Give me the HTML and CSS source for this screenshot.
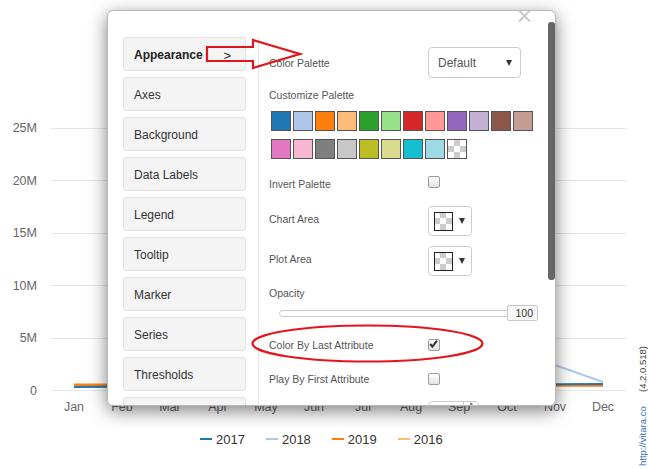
FILE: index.html
```html
<!DOCTYPE html>
<html>
<head>
<meta charset="utf-8">
<link rel="stylesheet" href="styles.css">
</head>
<body>
<div class="page">
  <div class="chart">
    <svg class="plot" width="649" height="428" viewBox="0 0 649 428">
      <g class="grid">
        <line x1="51" y1="128.5" x2="627" y2="128.5"/>
        <line x1="51" y1="180.5" x2="627" y2="180.5"/>
        <line x1="51" y1="233.5" x2="627" y2="233.5"/>
        <line x1="51" y1="285.5" x2="627" y2="285.5"/>
        <line x1="51" y1="338.5" x2="627" y2="338.5"/>
        <line x1="51" y1="390.5" x2="627" y2="390.5"/>
      </g>
      <g class="ylab">
        <text x="37" y="132">25M</text>
        <text x="37" y="185">20M</text>
        <text x="37" y="237">15M</text>
        <text x="37" y="290">10M</text>
        <text x="37" y="342">5M</text>
        <text x="37" y="395">0</text>
      </g>
      <g class="xlab">
        <text x="74" y="411">Jan</text>
        <text x="122" y="411">Feb</text>
        <text x="170" y="411">Mar</text>
        <text x="218" y="411">Apr</text>
        <text x="266" y="411">May</text>
        <text x="314" y="411">Jun</text>
        <text x="363" y="411">Jul</text>
        <text x="411" y="411">Aug</text>
        <text x="459" y="411">Sep</text>
        <text x="507" y="411">Oct</text>
        <text x="555" y="411">Nov</text>
        <text x="603" y="411">Dec</text>
      </g>
      <g class="series">
        <polyline class="s2018" points="74,386 507,386 555,365 603,382"/>
        <polyline class="s2016" points="74,384 603,386"/>
        <polyline class="s2019" points="74,385 603,385.5"/>
        <polyline class="s2017" points="74,387 603,384"/>
      </g>
    </svg>
    <div class="legend">
      <div class="legend-item"><span class="key k2017"></span>2017</div>
      <div class="legend-item"><span class="key k2018"></span>2018</div>
      <div class="legend-item"><span class="key k2019"></span>2019</div>
      <div class="legend-item"><span class="key k2016"></span>2016</div>
    </div>
  </div>

  <div class="credit"><span class="link">http://vitara.co</span><span class="ver">(4.2.0.518)</span></div>

  <div class="dialog">
    <svg class="close" width="13" height="12" viewBox="0 0 13 12"><path d="M1 0.5 L12 11.5 M12 0.5 L1 11.5"/></svg>
    <div class="scrollbar"></div>
    <div class="menu">
      <div class="menu-btn active"><span>Appearance</span><span class="chev">&gt;</span></div>
      <div class="menu-btn">Axes</div>
      <div class="menu-btn">Background</div>
      <div class="menu-btn">Data Labels</div>
      <div class="menu-btn">Legend</div>
      <div class="menu-btn">Tooltip</div>
      <div class="menu-btn">Marker</div>
      <div class="menu-btn">Series</div>
      <div class="menu-btn">Thresholds</div>
      <div class="menu-btn">&nbsp;</div>
    </div>
    <div class="panel">
      <div class="row row-palette">
        <div class="label">Color Palette</div>
        <div class="select"><span>Default</span><span class="tri"></span></div>
      </div>
      <div class="label block-label lab-custom">Customize Palette</div>
      <div class="swatches">
        <span class="sw" style="background:#1f77b4"></span>
        <span class="sw" style="background:#aec7e8"></span>
        <span class="sw" style="background:#ff7f0e"></span>
        <span class="sw" style="background:#ffbb78"></span>
        <span class="sw" style="background:#2ca02c"></span>
        <span class="sw" style="background:#98df8a"></span>
        <span class="sw" style="background:#d62728"></span>
        <span class="sw" style="background:#ff9896"></span>
        <span class="sw" style="background:#9467bd"></span>
        <span class="sw" style="background:#c5b0d5"></span>
        <span class="sw" style="background:#8c564b"></span>
        <span class="sw" style="background:#c49c94"></span>
        <span class="sw" style="background:#e377c2"></span>
        <span class="sw" style="background:#f7b6d2"></span>
        <span class="sw" style="background:#7f7f7f"></span>
        <span class="sw" style="background:#c7c7c7"></span>
        <span class="sw" style="background:#bcbd22"></span>
        <span class="sw" style="background:#dbdb8d"></span>
        <span class="sw" style="background:#17becf"></span>
        <span class="sw" style="background:#9edae5"></span>
        <span class="sw checker"></span>
      </div>
      <div class="row row-invert">
        <div class="label">Invert Palette</div>
        <span class="checkbox up2"></span>
      </div>
      <div class="row row-picker row-chart">
        <div class="label up2">Chart Area</div>
        <div class="picker"><span class="pick-sw"></span><span class="tri"></span></div>
      </div>
      <div class="row row-picker row-plot">
        <div class="label up2">Plot Area</div>
        <div class="picker"><span class="pick-sw"></span><span class="tri"></span></div>
      </div>
      <div class="label block-label lab-opacity">Opacity</div>
      <div class="row row-slider">
        <div class="track"></div>
        <div class="value">100</div>
      </div>
      <div class="row row-check row-last">
        <div class="label">Color By Last Attribute</div>
        <span class="checkbox checked"><svg width="12" height="12" viewBox="0 0 12 12"><path d="M2.3 6 L4.8 8.8 L9.8 2.4"/></svg></span>
      </div>
      <div class="row row-check row-first">
        <div class="label">Play By First Attribute</div>
        <span class="checkbox"></span>
      </div>
      <div class="row row-num">
        <div class="label">&nbsp;</div>
        <div class="num"><span class="num-val"></span><span class="spin">^</span></div>
      </div>
    </div>
  </div>

  <svg class="annot" width="649" height="469" viewBox="0 0 649 469">
    <polygon points="207,47 253,47 253,40 300,54 253,68 253,61 207,61"/>
    <ellipse cx="367.5" cy="343.5" rx="115" ry="18"/>
  </svg>
</div>
</body>
</html>
```

FILE: styles.css
```css
html, body {
  margin: 0;
  padding: 0;
  background: #fff;
}

.page {
  position: relative;
  width: 649px;
  height: 469px;
  overflow: hidden;
  font-family: "Liberation Sans", Arial, sans-serif;
}

.chart {
  display: flex;
  flex-direction: column;
}

.plot {
  display: block;
}

.grid line {
  stroke: #e6e6e6;
  stroke-width: 1;
}

.ylab text {
  font-family: "Liberation Sans", Arial, sans-serif;
  font-size: 12.5px;
  fill: #666;
  text-anchor: end;
}

.xlab text {
  font-family: "Liberation Sans", Arial, sans-serif;
  font-size: 12.5px;
  fill: #666;
  text-anchor: middle;
}

.series polyline {
  fill: none;
  stroke-width: 2;
}

.s2017 { stroke: #1f77b4; }
.s2018 { stroke: #aec7e8; }
.s2019 { stroke: #ff7f0e; }
.s2016 { stroke: #ffbb78; }

.legend {
  display: flex;
  align-items: center;
  gap: 21px;
  padding-left: 200px;
  height: 22px;
  font-size: 13px;
  color: #333;
}

.legend-item {
  display: flex;
  align-items: center;
  gap: 4px;
}

.key {
  display: inline-block;
  width: 12px;
  height: 2px;
}

.k2017 { background: #1f77b4; }
.k2018 { background: #aec7e8; }
.k2019 { background: #ff7f0e; }
.k2016 { background: #ffbb78; }

.credit {
  position: absolute;
  left: 638px;
  top: 338px;
  height: 128px;
  writing-mode: vertical-rl;
  transform: rotate(180deg);
  font-size: 9.5px;
  white-space: nowrap;
  line-height: 10px;
}

.credit .link { color: #2a6db5; }
.credit .ver {
  color: #444;
  margin-inline-start: 14px;
}

/* Dialog */
.dialog {
  position: absolute;
  left: 107px;
  top: 10px;
  width: 449px;
  height: 396px;
  box-sizing: border-box;
  border: 1px solid #b8b8b8;
  border-radius: 6px;
  background: #fff;
  box-shadow: 0 5px 18px rgba(0, 0, 0, 0.5);
  overflow: hidden;
  display: flex;
  align-items: flex-start;
}

.close {
  position: absolute;
  left: 410px;
  top: -1px;
}

.close path {
  stroke: #c8c8c8;
  stroke-width: 2;
  fill: none;
}

.scrollbar {
  position: absolute;
  right: 0;
  top: 11px;
  width: 7px;
  height: 258px;
  background: #666;
  border-radius: 3px;
}

.menu {
  width: 150px;
  box-sizing: border-box;
  padding: 26px 12px 0 15px;
  display: flex;
  flex-direction: column;
  gap: 6px;
  flex-shrink: 0;
}

.menu-btn {
  height: 34px;
  box-sizing: border-box;
  border: 1px solid #e2e2e2;
  border-radius: 3px;
  background: #f4f4f4;
  display: flex;
  align-items: center;
  justify-content: space-between;
  padding: 2px 14px 0 10px;
  font-size: 12px;
  color: #333;
}

.menu-btn.active {
  font-weight: bold;
  color: #222;
}

.chev {
  font-weight: normal;
  font-size: 13px;
}

.panel {
  flex: 1;
  margin-top: 26px;
  border-left: 1px solid #e6e6e6;
  padding: 10px 0 0 10px;
  height: 400px;
  display: flex;
  flex-direction: column;
}

.row {
  display: flex;
  align-items: center;
  flex-shrink: 0;
}

.label {
  width: 159px;
  flex-shrink: 0;
  font-size: 10.5px;
  color: #555;
  line-height: 14px;
}

.up2 { position: relative; top: -2px; }

.block-label {
  height: 14px;
}

.row-palette { height: 31px; }

.select {
  width: 93px;
  height: 31px;
  box-sizing: border-box;
  border: 1px solid #ccc;
  border-radius: 4px;
  display: flex;
  align-items: center;
  justify-content: space-between;
  padding: 0 8px 0 9px;
  font-size: 12px;
  color: #555;
}

.tri {
  width: 0;
  height: 0;
  border-left: 3px solid transparent;
  border-right: 3px solid transparent;
  border-top: 6px solid #333;
}

.lab-custom { margin-top: 10px; }

.swatches {
  margin-top: 9px;
  margin-left: 2px;
  display: grid;
  grid-template-columns: repeat(12, 20px);
  grid-auto-rows: 20px;
  column-gap: 2px;
  row-gap: 8px;
  flex-shrink: 0;
}

.sw {
  box-sizing: border-box;
  border: 1px solid #555;
}

.checker,
.pick-sw {
  background: repeating-conic-gradient(#cccccc 0 25%, #ffffff 0 50%) 0 0 / 12px 12px;
}

.row-invert { height: 28px; margin-top: 11px; }

.checkbox {
  width: 12px;
  height: 12px;
  box-sizing: border-box;
  border: 1px solid #9c9c9c;
  border-radius: 2px;
  background: linear-gradient(#fdfdfd, #e2e2e2);
  display: inline-flex;
  align-items: center;
  justify-content: center;
}

.checkbox svg { display: block; margin-left: -1px; margin-top: -1px; }

.checkbox path {
  fill: none;
  stroke: #333;
  stroke-width: 2.2;
}

.row-picker { height: 30px; }
.row-chart { margin-top: 8px; }
.row-plot { margin-top: 10px; }

.picker {
  width: 44px;
  height: 30px;
  box-sizing: border-box;
  border: 1px solid #ccc;
  border-radius: 4px;
  display: flex;
  align-items: center;
  gap: 6px;
  padding-left: 5px;
}

.pick-sw {
  width: 19px;
  height: 19px;
  box-sizing: border-box;
  border: 1px solid #222;
  background-size: 12px 12px;
  background-position: -1px -1px;
}

.lab-opacity { margin-top: 10px; }

.row-slider { height: 16px; margin-top: 5px; }

.track {
  margin-left: 10px;
  width: 231px;
  height: 7px;
  box-sizing: border-box;
  border: 1px solid #c8c8c8;
  border-radius: 4px;
  background: #fff;
}

.value {
  margin-left: -3px;
  width: 31px;
  height: 16px;
  box-sizing: border-box;
  border: 1px solid #c8c8c8;
  border-radius: 2px;
  background: #f8f8f8;
  font-size: 10.5px;
  color: #333;
  text-align: right;
  padding-right: 4px;
  line-height: 14px;
}

.row-check { height: 27px; }
.row-last { margin-top: 10px; }
.row-first { margin-top: 7px; }

.row-num { height: 30px; margin-top: 9px; align-items: flex-start; }

.num {
  width: 51px;
  height: 30px;
  box-sizing: border-box;
  border: 1px solid #ccc;
  border-radius: 4px;
  display: flex;
}

.num-val { width: 34px; border-right: 1px solid #ccc; }

.spin {
  flex: 1;
  text-align: center;
  font-size: 10px;
  color: #333;
  line-height: 12px;
}

.annot {
  position: absolute;
  left: 0;
  top: 0;
  pointer-events: none;
}

.annot polygon,
.annot ellipse {
  fill: none;
  stroke: #e3141c;
  stroke-width: 2.2;
}
```
